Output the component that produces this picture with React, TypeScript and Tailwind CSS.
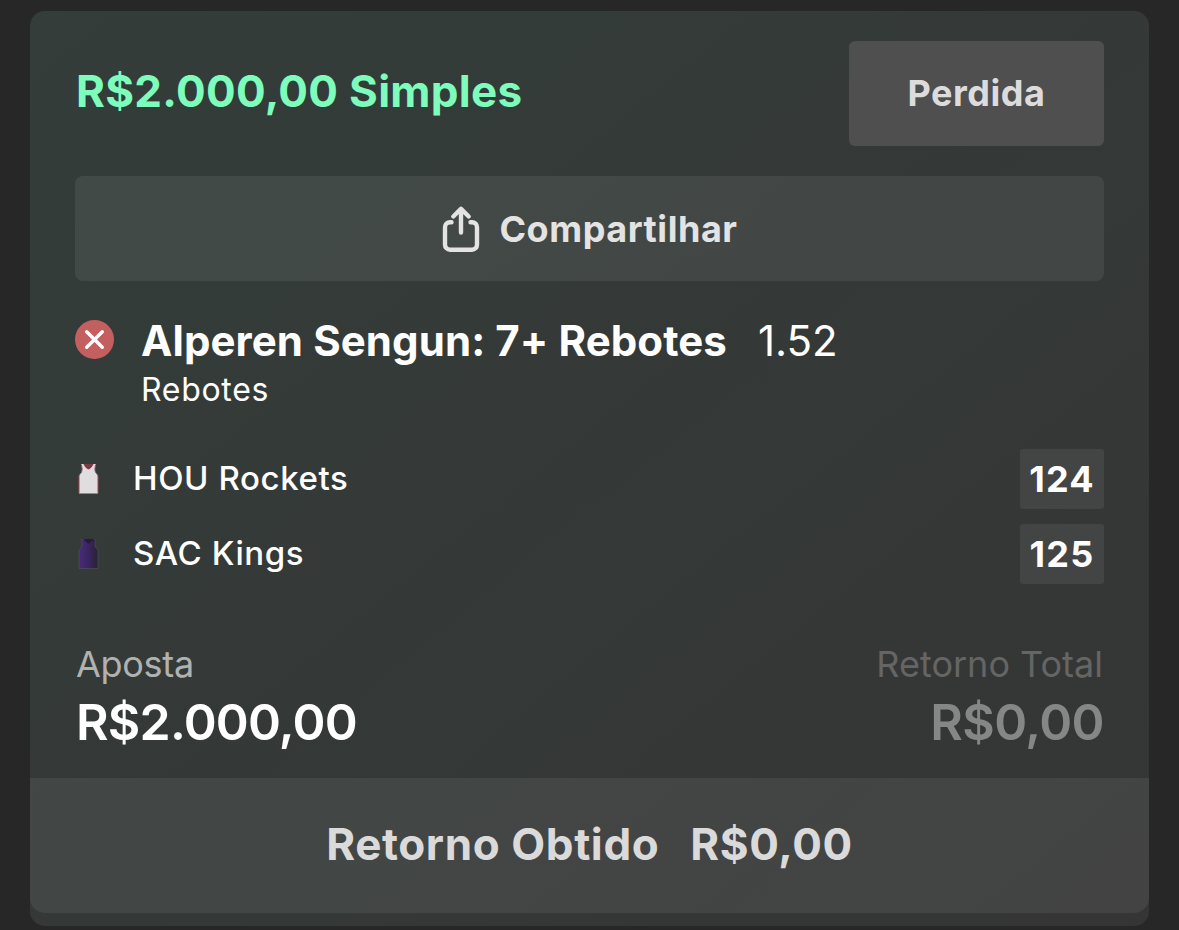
import React from 'react';

interface TeamRowProps {
  name: string;
  score: number;
  children: React.ReactNode;
}

function ShareIcon() {
  return (
    <svg className="shrink-0" width="38" height="48" viewBox="0 0 38 48" fill="none" stroke="#e3e3e3" strokeWidth="4.4" strokeLinecap="round" strokeLinejoin="round">
      <path d="M9.500 17.200H8a5 5 0 0 0-5 5v17.500a5 5 0 0 0 5 5h22a5 5 0 0 0 5-5v-17.500a5 5 0 0 0-5-5h-1.500" />
      <path d="M19 27.500V5M11.300 11.500 19 3.800l7.700 7.700" />
    </svg>
  );
}

function LostIcon() {
  return (
    <svg className="mt-1 shrink-0" width="39" height="39" viewBox="0 0 39 39">
      <circle cx="19.5" cy="19.5" r="19.5" fill="#c45f5f" />
      <path d="m11.700 11.700 15.600 15.600m0-15.600L11.700 27.300" stroke="#fff" strokeWidth="3.4" strokeLinecap="round" />
    </svg>
  );
}

function RocketsJersey() {
  return (
    <svg width="26" height="30" viewBox="0 0 26 30">
      <path d="M6 0c1 3.500 1.600 6 .3 8.500C5.300 10 4 10.500 4 12.500v17h19v-17c0-2-1.300-2.500-2.300-4-1.300-2.500-.7-5 .3-8.500z" fill="#dfdddd" />
      <path d="M8.500 0h10c-1 2.500-2.500 4.500-5 5.500C11 4.500 9.500 2.500 8.500 0z" fill="#7d3a42" />
      <path d="M4 29V12.500c0-2 1.300-2.500 2.300-4C7.600 6 7 3.500 6.300.5M23 29V12.500c0-2-1.300-2.500-2.300-4C19.400 6 20 3.500 20.700.5" fill="none" stroke="#994a54" />
    </svg>
  );
}

function KingsJersey() {
  return (
    <svg width="26" height="30" viewBox="0 0 26 30">
      <defs>
        <linearGradient id="kings">
          <stop offset="0" stopColor="#482b7c" />
          <stop offset=".5" stopColor="#392560" />
          <stop offset="1" stopColor="#28222f" />
        </linearGradient>
      </defs>
      <path d="M6 0c1 3.500 1.600 6 .3 8.500C5.300 10 4 10.500 4 12.500v17h19v-17c0-2-1.300-2.500-2.300-4-1.300-2.500-.7-5 .3-8.500z" fill="url(#kings)" stroke="#514d5c" strokeWidth=".7" />
      <path d="M8.500 0h10l-5 5z" fill="#261b3c" />
    </svg>
  );
}

function TeamRow({ name, score, children }: TeamRowProps) {
  return (
    <div className="flex h-[60px] items-center">
      {children}
      <span className="ml-8 grow pb-px text-[33px] leading-none font-medium tracking-[0.6px]">{name}</span>
      <span className="flex h-[60px] w-[84px] items-center justify-center rounded-[3px] bg-[#434444] pb-px text-[36px] font-bold tracking-[1.2px]">{score}</span>
    </div>
  );
}

export default function App() {
  return (
    <div className="h-[930px] w-[1179px] bg-[#272727] px-[30px] pt-[11px] font-['Inter',sans-serif] text-white">
      <div className="h-[915px] overflow-hidden rounded-[15px] bg-linear-to-br from-[#333d39] to-[#353535]">
        <div className="flex h-[767px] flex-col px-[45px] pt-[30px]">
          {/* Stake and status */}
          <div className="flex h-[105px] justify-between">
            <h1 className="pl-px text-[44px] leading-[100px] font-bold tracking-[0.3px] text-[#7dfcbc]">R$2.000,00 Simples</h1>
            <div className="flex w-[255px] items-center justify-center rounded-[6px] bg-[#4f4f4f] pb-0.5 text-[36px] font-bold tracking-[0.5px] text-[#dcdcdc]">Perdida</div>
          </div>

          <button className="mt-[30px] flex h-[105px] items-center justify-center gap-[19px] rounded-[8px] bg-white/7 pl-px text-[36px] font-bold tracking-[0.55px] text-[#e3e3e3]">
            <ShareIcon />
            Compartilhar
          </button>

          {/* Selection */}
          <div className="mt-[35px] flex">
            <LostIcon />
            <div className="ml-[27px]">
              <div className="flex text-[42px] leading-[50px]">
                <span className="font-bold tracking-[0.09px]">Alperen Sengun: 7+ Rebotes</span>
                <span className="ml-[31px]">1.52</span>
              </div>
              <div className="text-[32px] leading-[48px] tracking-[0.7px]">Rebotes</div>
            </div>
          </div>

          <div className="mt-[35px] flex flex-col gap-[15px]">
            <TeamRow name="HOU Rockets" score={124}>
              <RocketsJersey />
            </TeamRow>
            <TeamRow name="SAC Kings" score={125}>
              <KingsJersey />
            </TeamRow>
          </div>

          {/* Totals */}
          <div className="mt-[55px] flex justify-between">
            <div>
              <div className="pl-px text-[36px] leading-[50px] tracking-[-0.3px] text-[#b0b2b1]">Aposta</div>
              <div className="pl-px text-[50px] leading-[66px] font-semibold tracking-[-0.8px]">R$2.000,00</div>
            </div>
            <div className="text-right">
              <div className="pr-px text-[36px] leading-[50px] text-[#646564]">Retorno Total</div>
              <div className="text-[50px] leading-[66px] font-semibold tracking-[-0.6px] text-[#868686]">R$0,00</div>
            </div>
          </div>
        </div>

        <div className="flex h-[135px] items-center justify-center gap-[31px] rounded-b-[15px] bg-white/7 pb-[3px] text-[44px] font-bold tracking-[0.6px] text-[#dadada]">
          <span>Retorno Obtido</span>
          <span>R$0,00</span>
        </div>
      </div>
    </div>
  );
}
